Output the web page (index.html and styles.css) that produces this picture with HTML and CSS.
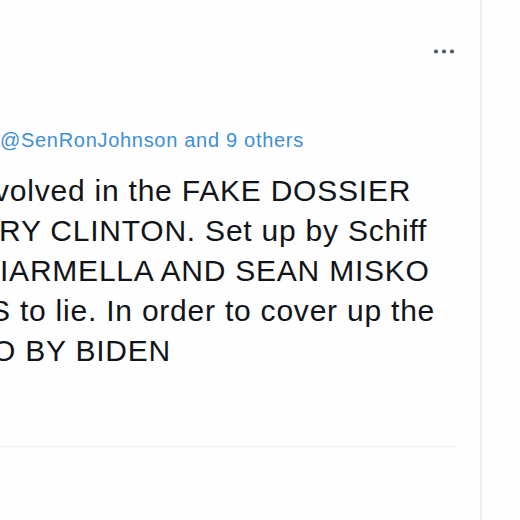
FILE: index.html
```html
<!DOCTYPE html>
<html>
<head>
<meta charset="utf-8">
<link rel="stylesheet" href="styles.css">
</head>
<body>
<div class="page">
  <div class="column">
    <div class="tweet">
      <div class="head">
        <svg class="more" width="22" height="5" viewBox="0 0 22 5"><circle cx="3" cy="2.5" r="2.1"/><circle cx="11" cy="2.5" r="2.1"/><circle cx="19" cy="2.5" r="2.1"/></svg>
      </div>
      <div class="reply">@SenRonJohnson and 9 others</div>
      <div class="text">
        <span class="line l1">volved in the FAKE DOSSIER</span>
        <span class="line l2">RY CLINTON. Set up by Schiff</span>
        <span class="line l3">IARMELLA AND SEAN MISKO</span>
        <span class="line l4">S to lie. In order to cover up the</span>
        <span class="line l5">O BY BIDEN</span>
      </div>
      <div class="divider"></div>
    </div>
  </div>
  <div class="side"></div>
</div>
</body>
</html>
```

FILE: styles.css
```css
html, body {
  margin: 0;
  padding: 0;
  background: #fefefe;
}
.page {
  display: flex;
  width: 520px;
  height: 520px;
  overflow: hidden;
  font-family: "Liberation Sans", Arial, sans-serif;
}
.column {
  width: 480px;
  flex: none;
  border-right: 2px solid #efefef;
  overflow: hidden;
}
.side {
  flex: 1;
}
.tweet {
  padding-right: 24px;
}
.head {
  height: 54px;
  display: flex;
  justify-content: flex-end;
  align-items: flex-end;
}
.more {
  display: block;
  fill: #505a63;
  margin-right: 1px;
}
.reply {
  margin-top: 74px;
  font-size: 20px;
  line-height: 24px;
  letter-spacing: 0.7px;
  color: #3d8fd8;
  white-space: nowrap;
}
.text {
  margin-top: 19px;
  font-size: 30px;
  line-height: 40px;
  letter-spacing: 0.78px;
  color: #111418;
}
.line {
  display: block;
  white-space: nowrap;
}
.l1 {
  text-indent: -6px;
}
.l2 {
  text-indent: -1px;
}
.l4 {
  text-indent: -10px;
}
.l5 {
  text-indent: -8px;
}
.divider {
  margin-top: 75px;
  border-bottom: 1px solid #f0f0f0;
}
```
